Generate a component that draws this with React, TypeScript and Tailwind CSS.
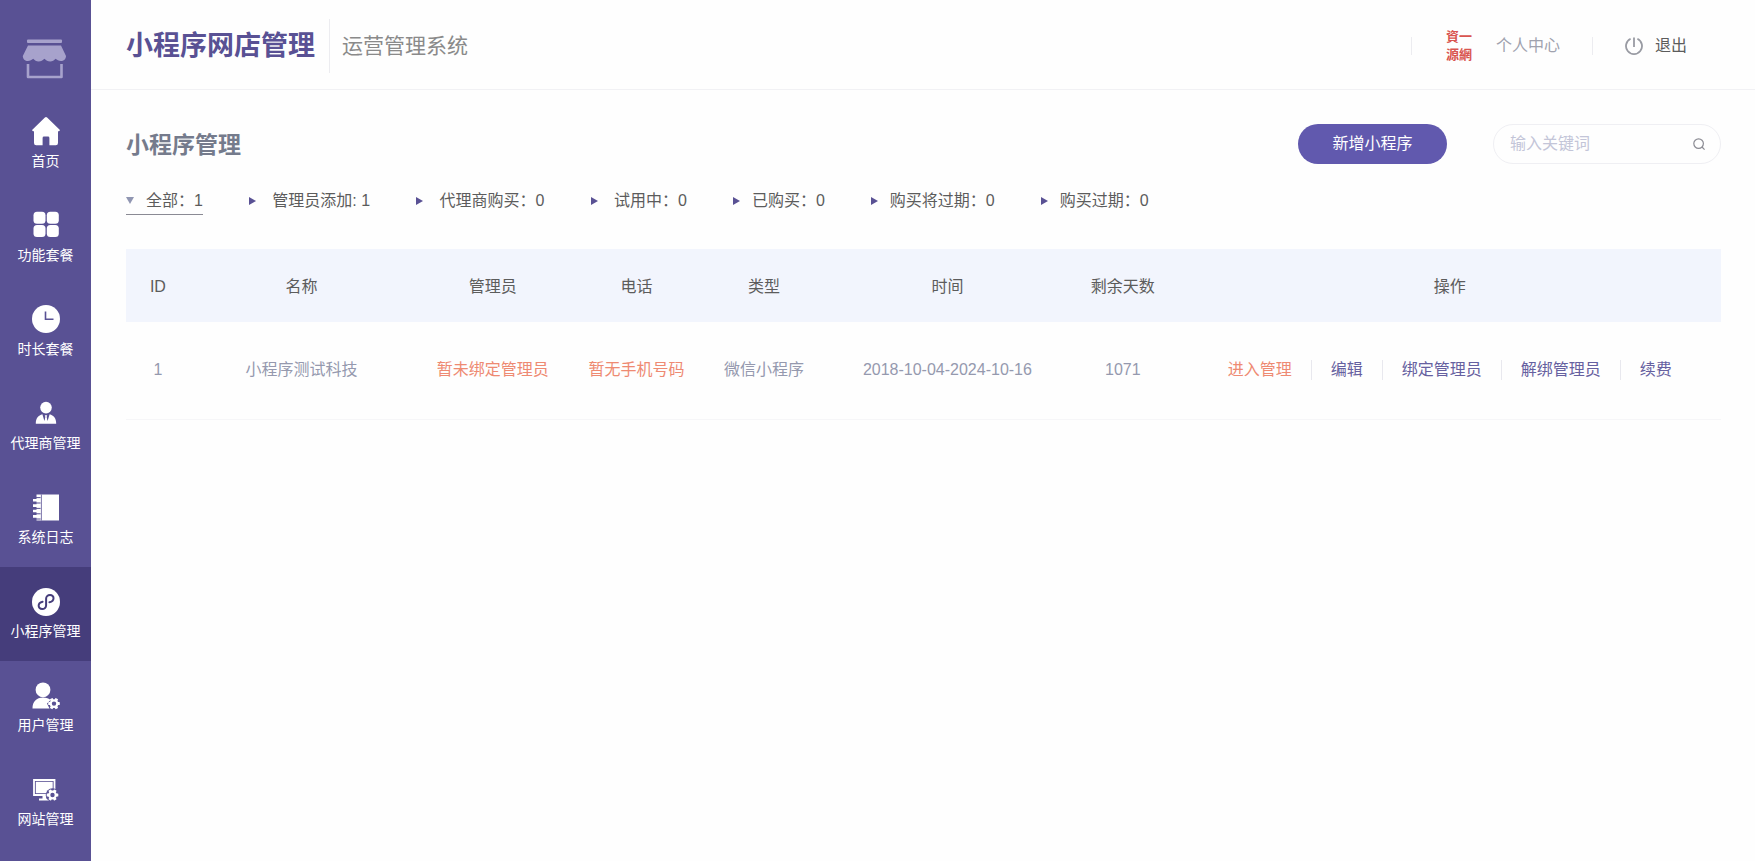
import type { ReactNode } from "react";

const navItems: { label: string; active?: boolean; icon: ReactNode }[] = [
  {
    label: "首页",
    icon: (
      <path d="M12.9 0.6 a1.6 1.6 0 0 1 2.2 0 L27.4 12.4 a1 1 0 0 1 -0.7 1.8 H26 V26 a2.2 2.2 0 0 1 -2.2 2.2 H17.4 V21 a1.4 1.4 0 0 0 -1.4 -1.4 h-4 a1.4 1.4 0 0 0 -1.4 1.4 V28.2 H4.2 A2.2 2.2 0 0 1 2 26 V14.2 H1.3 A1 1 0 0 1 0.6 12.4 Z" />
    ),
  },
  {
    label: "功能套餐",
    icon: (
      <>
        <rect x="1.5" y="0.8" width="12" height="12" rx="3.5" />
        <rect x="14.8" y="0.8" width="12" height="12" rx="3.5" />
        <rect x="1.5" y="14.1" width="12" height="12" rx="3.5" />
        <rect x="14.8" y="14.1" width="12" height="12" rx="3.5" />
      </>
    ),
  },
  {
    label: "时长套餐",
    icon: (
      <>
        <circle cx="14" cy="14" r="14" />
        <path d="M13.5 6.5 V14.2 H21.5" fill="none" stroke="#595194" strokeWidth="1.6" />
      </>
    ),
  },
  {
    label: "代理商管理",
    icon: (
      <>
        <circle cx="14" cy="8.6" r="5.8" />
        <path d="M3.8 24.8 C3.8 19 6.4 16.4 10.4 15.2 L12.4 22 L13.4 18.2 L12.8 16.2 H15.2 L14.6 18.2 L15.6 22 L17.6 15.2 C21.6 16.4 24.2 19 24.2 24.8 Z" />
        <path d="M13.4 18.4 L12.8 22.4 L14 24.2 L15.2 22.4 L14.6 18.4 Z" />
      </>
    ),
  },
  {
    label: "系统日志",
    icon: (
      <>
        <path d="M4.5 1.5 H27 V27.5 H4.5 Z" />
        <path d="M9.4 1.5 V27.5" stroke="#595194" strokeWidth="0.8" />
        <path d="M4 4.6 H8.6 M4 10 H8.6 M4 15.4 H8.6 M4 20.8 H8.6 M4 26 H8.6" stroke="#595194" strokeWidth="1" />
        <path d="M1 7.2 H7.6 M1 12.6 H7.6 M1 18 H7.6 M1 23.4 H7.6" stroke="#fff" strokeWidth="2.6" />
      </>
    ),
  },
  {
    label: "小程序管理",
    active: true,
    icon: (
      <>
        <circle cx="14" cy="15" r="14" />
        <path
          d="M17.4 15.2 C23 14 22.6 8 18 8 C15.6 8 14.1 9.8 14.1 11.8 V18.2 C14.1 20.4 12.4 22 10.2 22 C5.6 22 5.2 16 10.6 14.8"
          fill="none"
          stroke="#453d7b"
          strokeWidth="2"
          strokeLinecap="round"
        />
      </>
    ),
  },
  {
    label: "用户管理",
    icon: (
      <>
        <circle cx="11" cy="8.8" r="7.4" />
        <path d="M0.5 27.5 C0.5 20.5 4.5 16.5 11 16.5 C14.5 16.5 17 17.4 18.6 19 L15 22.5 L17.5 27.5 Z" />
        <Gear cx={22} cy={22.6} />
      </>
    ),
  },
  {
    label: "网站管理",
    icon: (
      <>
        <path d="M2 5 H22.5 V20 H2 Z" fill="none" stroke="#fff" strokeWidth="1.8" />
        <path d="M3.8 6.8 H20.7 V18.2 H3.8 Z" />
        <path d="M10.5 20.5 H14.5 V23.4 H17.5 V25.4 H7 V23.4 H10.5 Z" />
        <circle cx="20.5" cy="20" r="6.8" fill="#595194" />
        <Gear cx={20.5} cy={20} />
      </>
    ),
  },
];

// The leading no-break spaces push some labels away from their arrow.
const filters = [
  { label: "全部：1", active: true },
  { label: "\u00a0管理员添加: 1" },
  { label: "\u00a0代理商购买：0" },
  { label: "\u00a0试用中：0" },
  { label: "已购买：0" },
  { label: "购买将过期：0" },
  { label: "购买过期：0" },
];

const columns = [
  { title: "ID", width: "w-[4%]" },
  { title: "名称", width: "w-[14%]" },
  { title: "管理员", width: "w-[10%]" },
  { title: "电话", width: "w-[8%]" },
  { title: "类型", width: "w-[8%]" },
  { title: "时间", width: "w-[15%]" },
  { title: "剩余天数", width: "w-[7%]" },
  { title: "操作", width: "w-[34%]" },
];

const actions = ["进入管理", "编辑", "绑定管理员", "解绑管理员", "续费"];

function Gear({ cx, cy }: { cx: number; cy: number }) {
  return (
    <g transform={`translate(${cx} ${cy})`}>
      <circle r="3.3" fill="none" stroke="#fff" strokeWidth="2.2" />
      {[30, 90, 150, 210, 270, 330].map((angle) => (
        <rect key={angle} x="-1.5" y="-5.8" width="3" height="2.4" rx="0.6" transform={`rotate(${angle})`} />
      ))}
    </g>
  );
}

function Sidebar() {
  return (
    <aside className="w-[91px] shrink-0 bg-[#595194] text-white">
      <div className="flex h-[97px] pt-[38px] pl-[22px]">
        <svg className="h-11 w-11" viewBox="0 0 44 44" fill="#a7a2cc" aria-hidden>
          <rect x="5" y="1.5" width="35" height="3.6" rx="1" />
          <path d="M6 7.4 H39 L44 18 C44 21 41.6 23 39 23 C36.6 23 35 22 33.6 20.8 C32.2 22.4 30.4 23.4 28.2 23.4 C25.8 23.4 24 22.4 22.4 20.8 C20.8 22.4 19 23.4 16.6 23.4 C14.4 23.4 12.6 22.4 11.2 20.8 C9.8 22 8.2 23 5.8 23 C3.2 23 0.8 21 0.8 18 Z" />
          <path d="M6 26 V39 H39.5 V26" fill="none" stroke="#a7a2cc" strokeWidth="2.6" strokeLinejoin="round" />
        </svg>
      </div>
      <nav>
        {navItems.map((item) => (
          <a
            key={item.label}
            href="#"
            className={`flex h-[94px] flex-col items-center gap-1 pt-5 text-sm leading-5 ${item.active ? "bg-[#453d7b]" : ""}`}
          >
            <svg className="h-[30px] w-7" viewBox="0 0 28 30" fill="#fff" aria-hidden>
              {item.icon}
            </svg>
            {item.label}
          </a>
        ))}
      </nav>
    </aside>
  );
}

function Header() {
  return (
    <header className="flex h-[90px] items-center justify-between border-b border-[#f1f1f4] pt-0.5 pr-[68px] pl-[35px]">
      <div className="flex items-center">
        <h1 className="text-[27px] leading-8 font-bold text-[#595194]">小程序网店管理</h1>
        <span className="ml-3.5 h-[54px] w-px bg-[#ececf0]" />
        <span className="ml-3 text-[21px] leading-8 text-[#8a8a8a]">运营管理系统</span>
      </div>
      <div className="flex items-center">
        <span className="h-[18px] w-px bg-[#ececf0]" />
        <a href="#" className="ml-[34px] flex items-center gap-6 text-[#a0a2ae]">
          <span className="grid grid-cols-2 text-[13px] leading-[18px] font-bold text-[#d95550]" aria-hidden>
            <span>資</span>
            <span>一</span>
            <span>源</span>
            <span>網</span>
          </span>
          个人中心
        </a>
        <span className="ml-8 h-[18px] w-px bg-[#ececf0]" />
        <button type="button" className="ml-8 flex items-center gap-3 text-[#5c5c5c]">
          <svg className="h-[18px] w-[18px]" viewBox="0 0 18 18" fill="none" stroke="#999ba3" strokeWidth="1.8" aria-hidden>
            <path d="M5.6 1.8 A8 8 0 1 0 12.4 1.8" />
            <path d="M9 0.5 V10" />
          </svg>
          退出
        </button>
      </div>
    </header>
  );
}

export default function App() {
  return (
    <div className="flex min-h-screen bg-[#fefefe] font-['Liberation_Sans','Noto_Sans_CJK_SC',sans-serif] text-base">
      <Sidebar />
      <div className="min-w-0 flex-1">
        <Header />
        <main className="pt-[34px] pr-[34px] pl-[35px]">
          <div className="flex items-center justify-between">
            <h2 className="pt-0.5 text-[23px] leading-8 font-bold text-[#757b8c]">小程序管理</h2>
            <div className="flex items-center gap-[46px]">
              <button type="button" className="h-10 w-[149px] rounded-full bg-[#6159ae] text-white">
                新增小程序
              </button>
              <form
                role="search"
                className="flex h-10 w-[228px] items-center rounded-full border border-[#efeff3] pr-[14px] pl-4"
              >
                <input
                  type="text"
                  aria-label="输入关键词"
                  placeholder="输入关键词"
                  className="min-w-0 flex-1 bg-transparent outline-none placeholder:text-[#c3c5d8]"
                />
                <button type="submit" aria-label="搜索">
                  <svg className="h-3.5 w-3.5" viewBox="0 0 14 14" fill="none" stroke="#8c8c94" strokeWidth="1.2" aria-hidden>
                    <circle cx="6.6" cy="6.6" r="4.8" />
                    <path d="M10 10 L12.6 12.6" />
                  </svg>
                </button>
              </form>
            </div>
          </div>

          <div className="mt-6 flex gap-[45px] text-[#5c5c5c]">
            {filters.map((filter) => (
              <a
                key={filter.label}
                href="#"
                className={`flex h-[27px] items-center gap-3 border-b leading-6 ${filter.active ? "border-[#8a8a94]" : "border-transparent"}`}
              >
                <svg className="h-2 w-2" viewBox="0 0 8 8" aria-hidden>
                  {filter.active ? <path d="M0 0 H8 L4 7 Z" fill="#9096b2" /> : <path d="M1 0 V8 L8 4 Z" fill="#595194" />}
                </svg>
                {filter.label}
              </a>
            ))}
          </div>

          <table className="mt-[34px] w-full table-fixed text-center">
            <thead className="bg-[#f2f5fd] text-[#5c5c5c]">
              <tr className="h-[73px]">
                {columns.map((column) => (
                  <th key={column.title} scope="col" className={`pt-0.5 font-normal ${column.width}`}>
                    {column.title}
                  </th>
                ))}
              </tr>
            </thead>
            <tbody>
              <tr className="h-[97px] border-b border-[#f6f6f8] text-[#9599ae]">
                <td>1</td>
                <td>小程序测试科技</td>
                <td className="text-[#ee8a72]">暂未绑定管理员</td>
                <td className="text-[#ee8a72]">暂无手机号码</td>
                <td>微信小程序</td>
                <td>2018-10-04-2024-10-16</td>
                <td>1071</td>
                <td>
                  <div className="flex items-center justify-center divide-x divide-[#e8e8ee]">
                    {actions.map((action, index) => (
                      <a
                        key={action}
                        href="#"
                        className={`px-[19px] leading-5 ${index === 0 ? "text-[#ee8a72]" : "text-[#6660a0]"}`}
                      >
                        {action}
                      </a>
                    ))}
                  </div>
                </td>
              </tr>
            </tbody>
          </table>
        </main>
      </div>
    </div>
  );
}
